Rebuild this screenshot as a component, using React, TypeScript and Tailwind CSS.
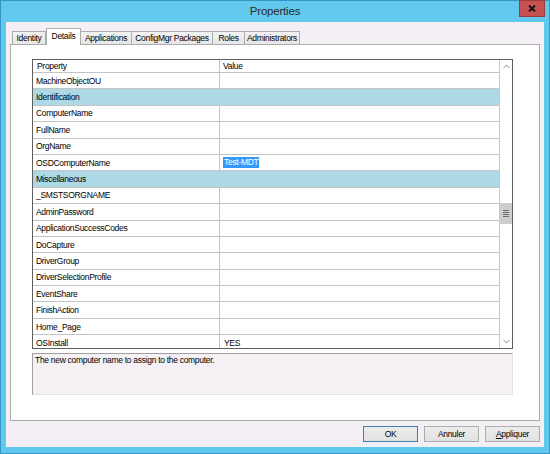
import React from 'react';

type Row = {
  name: string;
  value?: string;
  category?: boolean;
  selected?: boolean;
};

const rows: Row[] = [
  { name: 'MachineObjectOU' },
  { name: 'Identification', category: true },
  { name: 'ComputerName' },
  { name: 'FullName' },
  { name: 'OrgName' },
  { name: 'OSDComputerName', value: 'Test-MDT', selected: true },
  { name: 'Miscellaneous', category: true },
  { name: '_SMSTSORGNAME' },
  { name: 'AdminPassword' },
  { name: 'ApplicationSuccessCodes' },
  { name: 'DoCapture' },
  { name: 'DriverGroup' },
  { name: 'DriverSelectionProfile' },
  { name: 'EventShare' },
  { name: 'FinishAction' },
  { name: 'Home_Page' },
  { name: 'OSInstall', value: 'YES' }
];

const tabs = [
  { label: 'Identity', w: 'w-[34px]' },
  { label: 'Details', w: 'w-[35px]', active: true },
  { label: 'Applications', w: 'w-[51px]' },
  { label: 'ConfigMgr Packages', w: 'w-[81px]' },
  { label: 'Roles', w: 'w-[32px]' },
  { label: 'Administrators', w: 'w-[55px]' }
];

const font = { fontFamily: '"Liberation Sans", Arial, sans-serif' };

// small ui text, slightly tall and tight like the scaled screenshot
const small = 'text-[8.5px] tracking-[-0.3px]';

const Tabs = () => (
  <div className="ml-[2px] flex h-[16px] items-end">
    {tabs.map((t, i) =>
      t.active ? (
        <div
          key={t.label}
          className={`relative z-10 -mb-px flex h-[17px] ${t.w} items-start justify-center border-x border-t border-[#acacac] bg-white pt-[2px] ${small} leading-[10px] text-black`}
        >
          {t.label}
        </div>
      ) : (
        <div
          key={t.label}
          className={`flex h-[13px] ${t.w} items-center justify-center border-t border-r border-[#acacac] bg-gradient-to-b from-[#f2f2f2] to-[#e6e6e6] ${small} leading-[10px] text-black ${
            i === 0 ? 'border-l' : ''
          }`}
        >
          {t.label}
        </div>
      )
    )}
  </div>
);

const ScrollBar = () => (
  <div className="flex w-[13px] flex-col border-l border-[#c8c8c8] bg-white">
    <div className="flex h-[13px] items-center justify-center">
      <svg width="7" height="5" viewBox="0 0 7 5">
        <path d="M0.5 4 L3.5 1 L6.5 4" fill="none" stroke="#8a8a8a" strokeWidth="1" />
      </svg>
    </div>
    <div className="h-[130px]" />
    <div className="flex h-[21px] flex-col items-center justify-center gap-[1px] bg-[#cdcdcd]">
      <div className="h-px w-[6px] bg-[#6d6d6d]" />
      <div className="h-px w-[6px] bg-[#6d6d6d]" />
      <div className="h-px w-[6px] bg-[#6d6d6d]" />
      <div className="h-px w-[6px] bg-[#6d6d6d]" />
    </div>
    <div className="flex-1" />
    <div className="flex h-[13px] items-center justify-center">
      <svg width="7" height="5" viewBox="0 0 7 5">
        <path d="M0.5 1 L3.5 4 L6.5 1" fill="none" stroke="#8a8a8a" strokeWidth="1" />
      </svg>
    </div>
  </div>
);

const Grid = () => (
  <div className="flex h-[290px] w-[481px] overflow-hidden border border-[#5f5f5f] bg-white">
    <div className="flex flex-1 flex-col overflow-hidden">
      <div className={`flex h-[13px] shrink-0 border-b border-[#c4c4c4] ${small} leading-[12px] text-black`}>
        <div className="w-[187px] border-r border-[#c4c4c4] pl-[4px]">Property</div>
        <div className="flex-1 pl-[3px]">Value</div>
      </div>
      {rows.map((r) => (
        <div
          key={r.name}
          className={`flex h-[16.4px] shrink-0 border-b border-[#c4c4c4] ${small} leading-[10px] text-black ${
            r.category ? 'bg-[#add8e6]' : 'bg-white'
          }`}
        >
          <div
            className={`flex w-[187px] items-center border-r pl-[3px] ${
              r.category ? 'border-[#add8e6]' : 'border-[#c4c4c4]'
            }`}
          >
            {r.name}
          </div>
          <div className="flex flex-1 items-center pl-[3px]">
            {r.value &&
              (r.selected ? (
                <span className="bg-[#3399ff] px-px leading-[11px] text-white">{r.value}</span>
              ) : (
                <span className="pl-px">{r.value}</span>
              ))}
          </div>
        </div>
      ))}
    </div>
    <ScrollBar />
  </div>
);

const Button = ({ children, def }: { children: React.ReactNode; def?: boolean }) => (
  <div
    className={`flex h-[16px] w-[55px] items-center justify-center border bg-gradient-to-b from-[#ececec] to-[#e2e2e2] ${small} text-black ${
      def ? 'border-[#3c7fb1]' : 'border-[#acacac]'
    }`}
  >
    {children}
  </div>
);

export default function App() {
  return (
    <div
      className="flex h-[454px] w-[550px] flex-col border border-[#3596c4] bg-[#62c9ee]"
      style={font}
    >
      <div className="relative flex h-[21px] shrink-0 items-center justify-center">
        <span className="text-[11.5px] tracking-[-0.2px] text-[#2b2b2b]">Properties</span>
        <div className="absolute right-[4px] top-[-1px] flex h-[17px] w-[26px] items-center justify-center border border-[#9b3c3c] bg-[#c75050]">
          <svg width="8" height="7" viewBox="0 0 8 7">
            <path d="M1 0.5 L7 6.5 M7 0.5 L1 6.5" stroke="#111" strokeWidth="1.8" />
          </svg>
        </div>
      </div>
      <div className="mx-[5px] mb-[6px] flex flex-1 flex-col bg-[#f4eff4] px-[4px] pt-[6px]">
        <Tabs />
        <div className="flex h-[377px] flex-col border border-[#acacac] bg-white pl-[21px] pt-[14px]">
          <Grid />
          <div
            className={`mt-[4px] h-[42px] w-[481px] border-t border-l border-b border-r border-[#a0a0a0] border-b-[#e3e3e3] border-r-[#e3e3e3] bg-[#f4f0f4] pl-[2px] pt-[1px] ${small} leading-[11px] text-black`}
          >
            The new computer name to assign to the computer.
          </div>
        </div>
        <div className="mt-[5px] flex justify-end gap-[6px]">
          <Button def>OK</Button>
          <Button>Annuler</Button>
          <Button>
            <span>
              <span className="underline">A</span>ppliquer
            </span>
          </Button>
        </div>
      </div>
    </div>
  );
}
